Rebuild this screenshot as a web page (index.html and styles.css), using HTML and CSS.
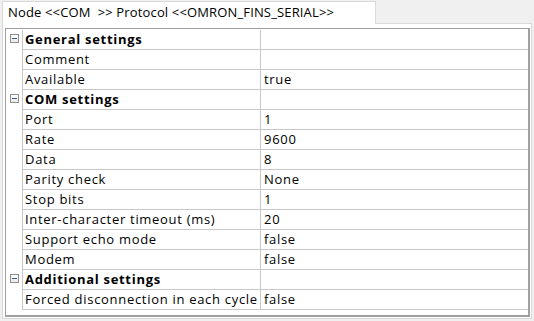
FILE: index.html
```html
<!DOCTYPE html>
<html>
<head>
<meta charset="utf-8">
<link rel="stylesheet" href="styles.css">
</head>
<body>
<div class="window">
  <div class="tabbar">
    <div class="tab">Node &lt;&lt;COM  &gt;&gt; Protocol &lt;&lt;OMRON_FINS_SERIAL&gt;&gt;</div>
  </div>
  <div class="panel">
    <div class="grid">
      <div class="rows">
        <div class="row head"><div class="exp"><span class="box"><span class="minus"></span></span></div><div class="cells"><div class="name">General settings</div><div class="val"></div></div></div>
        <div class="row"><div class="exp"></div><div class="cells"><div class="name">Comment</div><div class="val"></div></div></div>
        <div class="row"><div class="exp"></div><div class="cells"><div class="name">Available</div><div class="val">true</div></div></div>
        <div class="row head"><div class="exp"><span class="box"><span class="minus"></span></span></div><div class="cells"><div class="name">COM settings</div><div class="val"></div></div></div>
        <div class="row"><div class="exp"></div><div class="cells"><div class="name">Port</div><div class="val">1</div></div></div>
        <div class="row"><div class="exp"></div><div class="cells"><div class="name">Rate</div><div class="val">9600</div></div></div>
        <div class="row"><div class="exp"></div><div class="cells"><div class="name">Data</div><div class="val">8</div></div></div>
        <div class="row"><div class="exp"></div><div class="cells"><div class="name">Parity check</div><div class="val">None</div></div></div>
        <div class="row"><div class="exp"></div><div class="cells"><div class="name">Stop bits</div><div class="val">1</div></div></div>
        <div class="row"><div class="exp"></div><div class="cells"><div class="name">Inter-character timeout (ms)</div><div class="val">20</div></div></div>
        <div class="row"><div class="exp"></div><div class="cells"><div class="name">Support echo mode</div><div class="val">false</div></div></div>
        <div class="row"><div class="exp"></div><div class="cells"><div class="name">Modem</div><div class="val">false</div></div></div>
        <div class="row head"><div class="exp"><span class="box"><span class="minus"></span></span></div><div class="cells"><div class="name">Additional settings</div><div class="val"></div></div></div>
        <div class="row"><div class="exp"></div><div class="cells"><div class="name">Forced disconnection in each cycle</div><div class="val">false</div></div></div>
      </div>
    </div>
  </div>
</div>
</body>
</html>
```

FILE: styles.css
```css
html, body {
  margin: 0;
  padding: 0;
  background: #f0f0f0;
}
.window {
  width: 534px;
  height: 321px;
  font-family: "Open Sans", "DejaVu Sans", sans-serif;
  font-size: 13px;
  color: #000;
}
.tabbar {
  height: 23px;
  padding-left: 2px;
  display: flex;
  align-items: flex-end;
}
.tab {
  box-sizing: border-box;
  width: 374px;
  height: 23px;
  margin-bottom: -1px;
  background: #fff;
  border: 1px solid #d9d9d9;
  border-bottom: none;
  padding-left: 5px;
  line-height: 21px;
  white-space: pre;
  letter-spacing: 0.15px;
  position: relative;
  z-index: 1;
}
.panel {
  box-sizing: border-box;
  margin-left: 2px;
  width: 530px;
  height: 296px;
  background: #fff;
  border: 1px solid #d9d9d9;
  padding: 4px 1px 1px 2px;
}
.grid {
  box-sizing: border-box;
  width: 525px;
  height: 289px;
  border-left: 1px solid #a0a0a0;
  border-top: 1px solid #a0a0a0;
  border-right: 2px solid #a0a0a0;
  border-bottom: 2px solid #a0a0a0;
  background: #fff;
}
.rows {
  padding-top: 1px;
}
.row {
  display: flex;
  height: 20px;
}
.exp {
  width: 16px;
  flex: none;
}
.box {
  display: block;
  box-sizing: border-box;
  width: 9px;
  height: 9px;
  margin: 4px 0 0 4px;
  border: 1px solid #8e8f8f;
  background: linear-gradient(#ffffff, #e9e9e9);
  position: relative;
}
.minus {
  position: absolute;
  left: 1px;
  top: 3px;
  width: 5px;
  height: 1px;
  background: #3c5a8c;
}
.cells {
  flex: 1;
  display: flex;
  border-left: 1px solid #c8c8c8;
  border-bottom: 1px solid #c8c8c8;
  height: 19px;
  line-height: 19px;
  letter-spacing: 0.7px;
}
.name {
  width: 238px;
  flex: none;
  padding-left: 2px;
  box-sizing: border-box;
  border-right: 1px solid #c8c8c8;
  white-space: nowrap;
  overflow: hidden;
}
.val {
  flex: 1;
  padding-left: 3px;
  white-space: nowrap;
}
.head .name {
  font-weight: bold;
}
```
